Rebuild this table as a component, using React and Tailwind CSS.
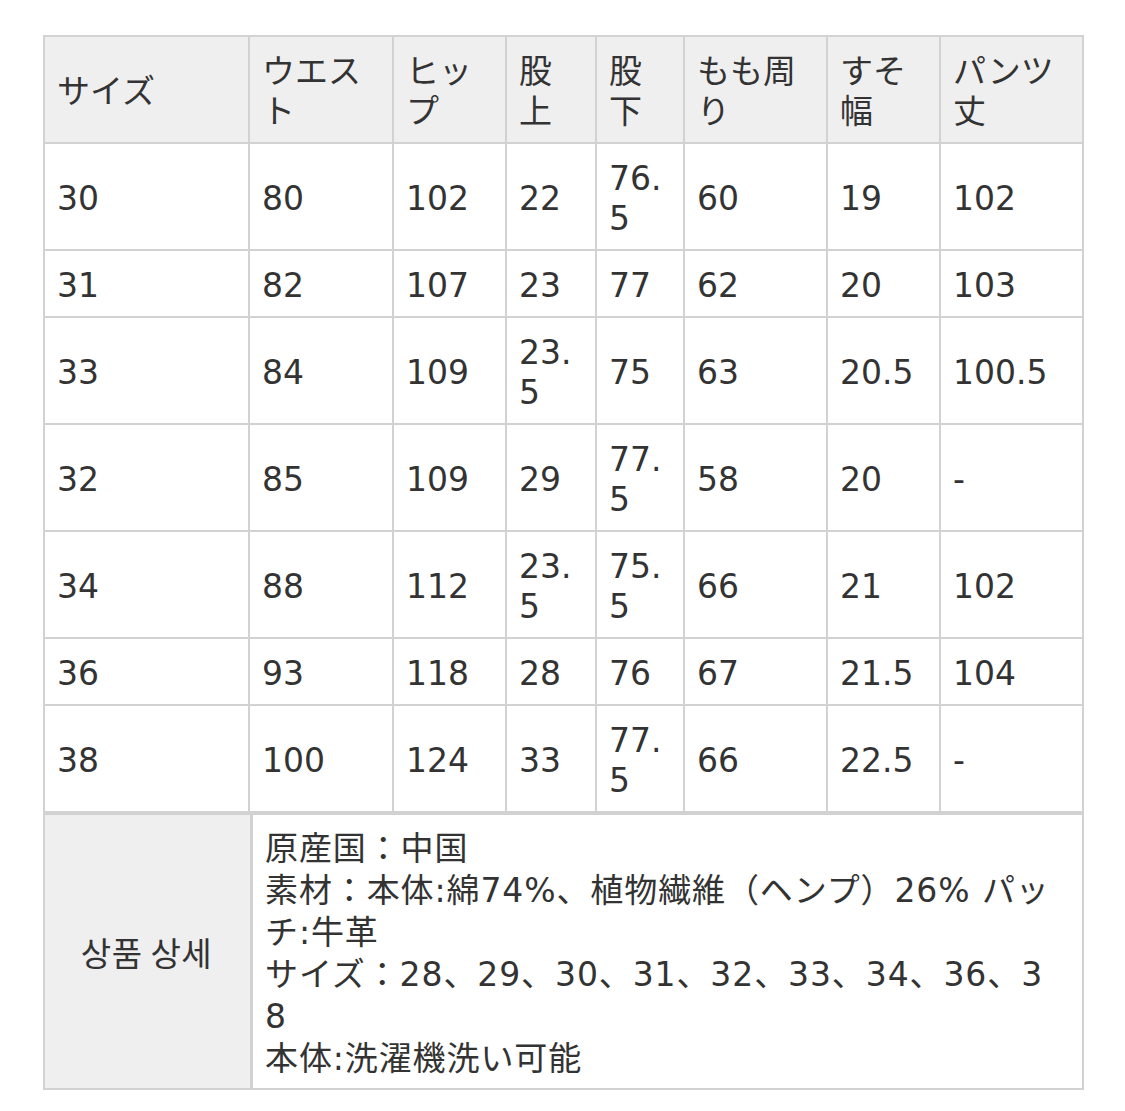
import React from "react";

const cols = ["w-[205px]", "w-[144px]", "w-[113px]", "w-[90px]", "w-[88px]", "w-[143px]", "w-[113px]", "w-[143px]"];

const header = [["サイズ"], ["ウエス", "ト"], ["ヒッ", "プ"], ["股", "上"], ["股", "下"], ["もも周", "り"], ["すそ", "幅"], ["パンツ", "丈"]];

const rows = [
  [["30"], ["80"], ["102"], ["22"], ["76.", "5"], ["60"], ["19"], ["102"]],
  [["31"], ["82"], ["107"], ["23"], ["77"], ["62"], ["20"], ["103"]],
  [["33"], ["84"], ["109"], ["23.", "5"], ["75"], ["63"], ["20.5"], ["100.5"]],
  [["32"], ["85"], ["109"], ["29"], ["77.", "5"], ["58"], ["20"], ["-"]],
  [["34"], ["88"], ["112"], ["23.", "5"], ["75.", "5"], ["66"], ["21"], ["102"]],
  [["36"], ["93"], ["118"], ["28"], ["76"], ["67"], ["21.5"], ["104"]],
  [["38"], ["100"], ["124"], ["33"], ["77.", "5"], ["66"], ["22.5"], ["-"]],
];

function Cell({ lines, w, head }) {
  return (
    <div
      className={`${w} shrink-0 flex flex-col justify-center border-r-2 border-b-2 border-[#d2d2d2] pl-3 pr-1 pt-[15px] pb-[10px] ${head ? "bg-[#efefef]" : "bg-white"}`}
    >
      {lines.map((l, i) => (
        <div key={i} className="whitespace-nowrap leading-[40px]">{l}</div>
      ))}
    </div>
  );
}

export default function App() {
  const detail = [
    "原産国：中国",
    "素材：本体:綿74%、植物繊維（ヘンプ）26% パッ",
    "チ:牛革",
    "サイズ：28、29、30、31、32、33、34、36、3",
    "8",
    "本体:洗濯機洗い可能",
  ];
  return (
    <div
      className="min-h-[1111px] bg-white pt-[35px] pl-[43px] text-[33px] text-[#333333]"
      style={{ fontFamily: '"DejaVu Sans", "Noto Sans CJK JP", "Noto Sans CJK KR", sans-serif' }}
    >
      <div className="w-[1041px] border-t-2 border-l-2 border-[#d2d2d2]">
        <div className="flex">
          {header.map((h, i) => (
            <Cell key={i} lines={h} w={cols[i]} head />
          ))}
        </div>
        {rows.map((r, ri) => (
          <div key={ri} className="flex">
            {r.map((c, i) => (
              <Cell key={i} lines={c} w={cols[i]} />
            ))}
          </div>
        ))}
      </div>
      <div className="w-[1041px] flex border-t-2 border-l-2 border-b-2 border-r-2 border-[#d2d2d2]">
        <div className="w-[208px] shrink-0 bg-[#efefef] border-r-[3px] border-[#d2d2d2] flex items-center justify-center pr-[2px] pt-[3px]">
          <span style={{ fontFamily: '"Noto Sans CJK KR", sans-serif' }} className="text-[33px] tracking-[0.5px]">상품 상세</span>
        </div>
        <div className="flex-1 pl-3 pt-[13px] pb-[8px] tracking-[0.9px]">
          {detail.map((l, i) => (
            <div key={i} className="whitespace-nowrap leading-[42px]">{l}</div>
          ))}
        </div>
      </div>
    </div>
  );
}
